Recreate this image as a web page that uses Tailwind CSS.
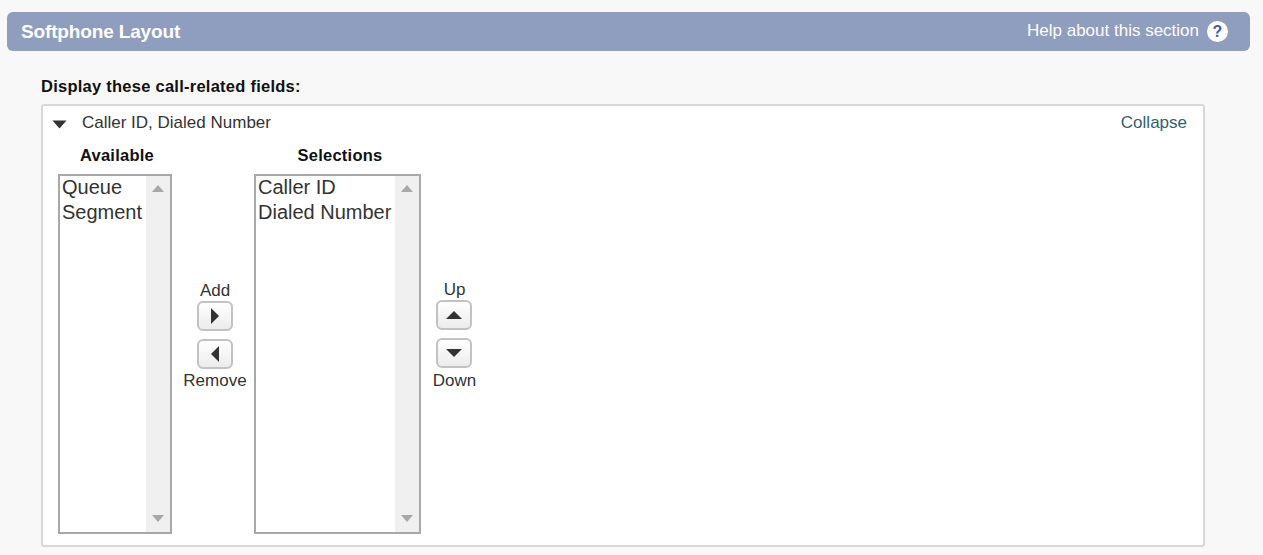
<!DOCTYPE html>
<html lang="en">
<head>
    <meta charset="UTF-8">
    <title>Softphone Layout</title>
    <script src="https://cdn.jsdelivr.net/npm/@tailwindcss/browser@4"></script>
</head>
<body class="bg-[#f8f8f8] h-[555px] overflow-hidden font-['Liberation_Sans',Arial,sans-serif] text-[#222]">

    <div class="pt-3 pl-[7px] pr-[13px]">
        <!-- Section header -->
        <div class="h-[39px] bg-[#8f9dbe] rounded-[6px] flex items-center justify-between pl-[14px] pr-[22px]">
            <h2 class="mt-[2px] text-[19px] font-bold text-white tracking-[-0.15px]">Softphone Layout</h2>
            <div class="flex items-center gap-[8px]">
                <span class="mb-[2px] text-[17px] text-white">Help about this section</span>
                <span class="w-[21px] h-[21px] rounded-full bg-white flex items-center justify-center text-[16px] font-bold text-[#3f5f9e]">?</span>
            </div>
        </div>

        <div class="ml-[34px] w-[1164px]">
            <p class="mt-[26px] h-[27px] text-[16.5px] leading-[19px] font-bold text-[#111] tracking-[0.25px]">Display these call-related fields:</p>

            <!-- Card -->
            <div class="h-[443px] bg-white border-2 border-[#d8d8d8] rounded-[3px]">
                <div class="flex items-center justify-between h-[34px] pl-[9px] pr-[16px]">
                    <div class="flex items-center">
                        <svg class="w-[15px] h-[9px] mt-[3px]" viewBox="0 0 15 9"><path d="M0.5 0.5H14.5L7.5 8.5Z" fill="#333"/></svg>
                        <span class="ml-[15px] text-[17px] text-[#333]">Caller ID, Dialed Number</span>
                    </div>
                    <a class="text-[17px] text-[#33616f]">Collapse</a>
                </div>

                <div class="flex pl-[15px]">
                    <!-- Available -->
                    <div class="w-[114px] shrink-0">
                        <div class="h-[34px] pt-[6px] text-center text-[16.5px] leading-[19px] font-bold text-[#111] tracking-[0.25px] pl-[4px]">Available</div>
                        <div class="h-[360px] border-2 border-[#a8a8a8] flex">
                            <div class="flex-1 pl-[2px] -mt-[1px] text-[20px] leading-[25px] text-[#333]">
                                <div>Queue</div>
                                <div>Segment</div>
                            </div>
                            <div class="w-[24px] bg-[#f0f0f0] flex flex-col justify-between items-center pt-[9px] pb-[10px]">
                                <svg class="w-[12px] h-[7px]" viewBox="0 0 12 7"><path d="M6 0L12 7H0Z" fill="#a8a8a8"/></svg>
                                <svg class="w-[12px] h-[7px]" viewBox="0 0 12 7"><path d="M0 0H12L6 7Z" fill="#a8a8a8"/></svg>
                            </div>
                        </div>
                    </div>

                    <!-- Add / Remove -->
                    <div class="w-[82px] shrink-0 flex flex-col items-center pl-[4px] pt-[142px] text-[17px] text-[#333]">
                        <span class="h-[19px] leading-[19px] mt-[-1px]">Add</span>
                        <button class="mt-[1px] w-[36px] h-[30px] rounded-[6px] border-2 border-[#c2c2c2] bg-linear-to-b from-white to-[#ececec] flex items-center justify-center">
                            <svg class="w-[8px] h-[16px]" viewBox="0 0 8 16"><path d="M0 0L8 8L0 16Z" fill="#333"/></svg>
                        </button>
                        <button class="mt-[8px] w-[36px] h-[30px] rounded-[6px] border-2 border-[#c2c2c2] bg-linear-to-b from-white to-[#ececec] flex items-center justify-center">
                            <svg class="w-[8px] h-[16px]" viewBox="0 0 8 16"><path d="M8 0L0 8L8 16Z" fill="#333"/></svg>
                        </button>
                        <span class="h-[19px] leading-[19px] mt-[2px]">Remove</span>
                    </div>

                    <!-- Selections -->
                    <div class="w-[167px] shrink-0">
                        <div class="h-[34px] pt-[6px] text-center text-[16.5px] leading-[19px] font-bold text-[#111] tracking-[0.25px] pl-[5px]">Selections</div>
                        <div class="h-[360px] border-2 border-[#a8a8a8] flex">
                            <div class="flex-1 pl-[2px] -mt-[1px] text-[20px] leading-[25px] text-[#333] whitespace-nowrap">
                                <div>Caller ID</div>
                                <div>Dialed Number</div>
                            </div>
                            <div class="w-[24px] bg-[#f0f0f0] flex flex-col justify-between items-center pt-[9px] pb-[10px]">
                                <svg class="w-[12px] h-[7px]" viewBox="0 0 12 7"><path d="M6 0L12 7H0Z" fill="#a8a8a8"/></svg>
                                <svg class="w-[12px] h-[7px]" viewBox="0 0 12 7"><path d="M0 0H12L6 7Z" fill="#a8a8a8"/></svg>
                            </div>
                        </div>
                    </div>

                    <!-- Up / Down -->
                    <div class="w-[67px] shrink-0 flex flex-col items-center pr-[2px] pt-[141px] text-[17px] text-[#333]">
                        <span class="h-[19px] leading-[19px] mt-[-1px] pl-[2px]">Up</span>
                        <button class="mt-[1px] w-[36px] h-[30px] rounded-[6px] border-2 border-[#c2c2c2] bg-linear-to-b from-white to-[#ececec] flex items-center justify-center">
                            <svg class="w-[16px] h-[8px]" viewBox="0 0 16 8"><path d="M8 0L16 8H0Z" fill="#333"/></svg>
                        </button>
                        <button class="mt-[8px] w-[36px] h-[30px] rounded-[6px] border-2 border-[#c2c2c2] bg-linear-to-b from-white to-[#ececec] flex items-center justify-center">
                            <svg class="w-[16px] h-[8px]" viewBox="0 0 16 8"><path d="M0 0H16L8 8Z" fill="#333"/></svg>
                        </button>
                        <span class="h-[19px] leading-[19px] mt-[3px] pl-[2px]">Down</span>
                    </div>
                </div>
            </div>
        </div>
    </div>

</body>
</html>
